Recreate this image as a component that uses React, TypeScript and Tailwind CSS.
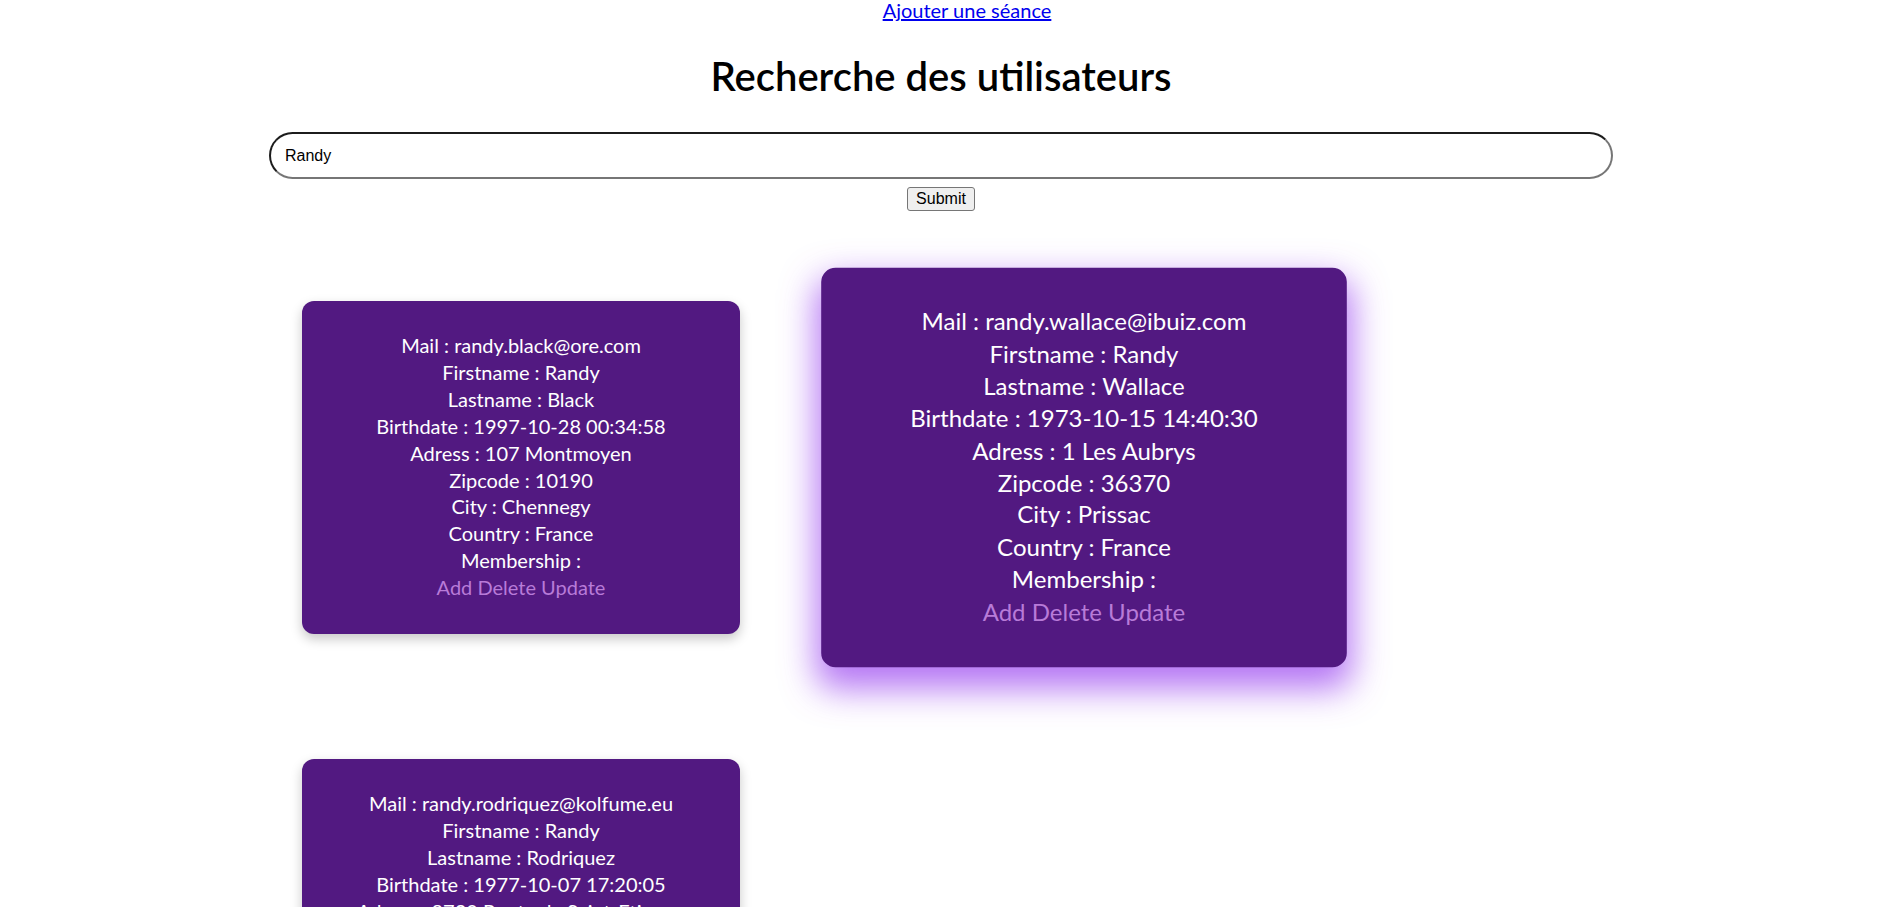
import React from "react";

type User = {
  mail: string;
  firstname: string;
  lastname: string;
  birthdate: string;
  adress: string;
  zipcode: string;
  city: string;
  country: string;
};

const users: User[] = [
  {
    mail: "randy.black@ore.com",
    firstname: "Randy",
    lastname: "Black",
    birthdate: "1997-10-28 00:34:58",
    adress: "107 Montmoyen",
    zipcode: "10190",
    city: "Chennegy",
    country: "France",
  },
  {
    mail: "randy.wallace@ibuiz.com",
    firstname: "Randy",
    lastname: "Wallace",
    birthdate: "1973-10-15 14:40:30",
    adress: "1 Les Aubrys",
    zipcode: "36370",
    city: "Prissac",
    country: "France",
  },
  {
    mail: "randy.rodriquez@kolfume.eu",
    firstname: "Randy",
    lastname: "Rodriquez",
    birthdate: "1977-10-07 17:20:05",
    adress: "8730 Route de Saint-Etienne",
    zipcode: "42170",
    city: "Saint-Just-Saint-Rambert",
    country: "France",
  },
];

function Card({ u, hovered }: { u: User; hovered?: boolean }) {
  return (
    <div
      className={
        "w-[438px] h-[333px] rounded-[12px] bg-[#521981] text-white text-center text-[20px] leading-[26.9px] pt-[31px] origin-center " +
        (hovered
          ? "scale-[1.2] shadow-[0_14px_28px_4px_rgba(150,60,240,0.7)]"
          : "shadow-[0_5px_12px_rgba(0,0,0,0.22)]")
      }
    >
      <div>Mail : {u.mail}</div>
      <div>Firstname : {u.firstname}</div>
      <div>Lastname : {u.lastname}</div>
      <div>Birthdate : {u.birthdate}</div>
      <div>Adress : {u.adress}</div>
      <div>Zipcode : {u.zipcode}</div>
      <div>City : {u.city}</div>
      <div>Country : {u.country}</div>
      <div>Membership : </div>
      <div className="text-[#b87bd8]">
        <a>Add</a> <a>Delete</a> <a>Update</a>
      </div>
    </div>
  );
}

export default function App() {
  return (
    <div
      className="min-h-screen bg-white text-black"
      style={{ fontFamily: "Lato, 'Noto Sans', sans-serif" }}
    >
      <div className="flex justify-center pl-[44px] text-[20px] leading-[20px]">
        <a className="text-[#0000ee] underline cursor-pointer">Ajouter une séance</a>
      </div>
      <div className="pr-[8px]">
        <h1 className="mt-[32px] text-center text-[40px] leading-[48px] font-semibold">
          Recherche des utilisateurs
        </h1>
        <form className="flex flex-col items-center mt-[32px]">
          <input
            defaultValue="Randy"
            className="w-[1344px] h-[47px] rounded-full border-2 border-t-[#1c1c1c] border-l-[#1c1c1c] border-r-[#767676] border-b-[#767676] pl-[14px] text-[16px] text-black outline-none"
            style={{ fontFamily: "'Liberation Sans', Arial, sans-serif" }}
          />
          <button
            type="button"
            className="mt-[8px] h-[24px] px-[8px] border border-[#767676] rounded-[3px] bg-[#efefef] text-[16px] leading-[20px] text-black"
            style={{ fontFamily: "'Liberation Sans', Arial, sans-serif" }}
          >
            Submit
          </button>
        </form>
      </div>
      <div className="mt-[90px] pl-[302px] grid grid-cols-[438px_438px] gap-x-[125px] gap-y-[125px] pb-[40px]">
        <Card u={users[0]} />
        <Card u={users[1]} hovered />
        <Card u={users[2]} />
      </div>
    </div>
  );
}
